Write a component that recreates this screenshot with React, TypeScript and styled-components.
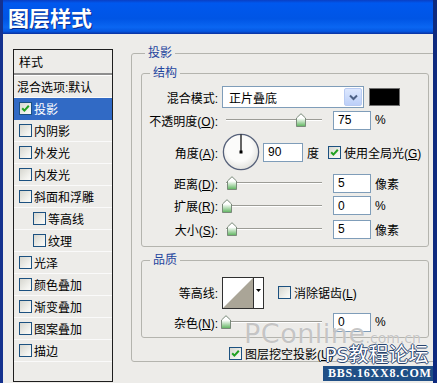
import React, { FC } from 'react';
import styled, { createGlobalStyle } from 'styled-components';

const GlobalStyle = createGlobalStyle`
  body {
    margin: 0;
    font-family: "Liberation Sans", "Noto Sans CJK SC", sans-serif;
    font-size: 12px;
    color: #000;
  }
`;

const Window = styled.div`
  position: relative;
  width: 437px;
  height: 383px;
  overflow: hidden;
  box-sizing: border-box;
  border-left: 3px solid #14318e;
  border-right: 4px solid #0e2a7e;
  background: #edece9;
`;

const TitleBar = styled.div`
  height: 34px;
  box-sizing: border-box;
  padding-left: 5px;
  display: flex;
  align-items: center;

  background: linear-gradient(
    #0a3fc4 0%,
    #0058ee 9%,
    #0055e5 55%,
    #0a66f2 80%,
    #0557e2 92%,
    #0a2f9c 100%
  );
  color: #fff;
  font-family: "Noto Sans CJK SC", sans-serif;
  font-size: 21px;
  font-weight: bold;
  text-shadow: 1px 1px 0 #0a2a8a;
`;

const Body = styled.div`
  display: flex;
  align-items: flex-start;
  padding-left: 10px;
  height: 349px;
  overflow: hidden;
`;

/* ---------- style list ---------- */

const StyleList = styled.div`
  flex: none;
  width: 100px;
  height: 333px;
  margin-top: 15px;
  box-sizing: border-box;
  border: 1px solid #1e1e1e;
  background: #edece9;
`;

const ListHeader = styled.div`
  height: 23px;
  padding-left: 5px;
  display: flex;
  align-items: center;
  border-bottom: 2px solid #8e8e8e;
  box-shadow: 0 1px 0 #fff;
  margin-bottom: 1px;
`;

const ListRow = styled.div<{ $indent?: boolean; $selected?: boolean; $plain?: boolean }>`
  height: 22px;
  box-sizing: border-box;
  display: flex;
  align-items: center;
  gap: 2px;
  padding-left: ${(p) => (p.$plain ? 3 : p.$indent ? 19 : 5)}px;
  border-bottom: 1px solid ${(p) => (p.$selected ? '#316ac5' : '#fafafa')};
  background: ${(p) => (p.$selected ? '#316ac5' : 'transparent')};
  color: ${(p) => (p.$selected ? '#fff' : '#000')};
  white-space: nowrap;
`;

const Box = styled.span`
  flex: none;
  position: relative;
  width: 13px;
  height: 13px;
  box-sizing: border-box;
  border: 1px solid #1c5180;
  background: linear-gradient(135deg, #d6d6cf 0%, #f2f2ee 70%, #fbfbf9 100%);

  svg {
    position: absolute;
    left: 0;
    top: 0;
  }
`;

const Check: FC<{ checked?: boolean }> = ({ checked }) => (
  <Box>
    {checked && (
      <svg width="11" height="11" viewBox="0 0 11 11">
        <path d="M2.2 5.2 L4.4 7.6 L8.8 2.8" fill="none" stroke="#21a121" strokeWidth="2" />
      </svg>
    )}
  </Box>
);

/* ---------- group boxes ---------- */

const GroupBox = styled.fieldset<{ $w: number }>`
  flex: none;
  width: ${(p) => p.$w}px;
  margin: 0;
  padding: 0;
  min-width: 0;
  box-sizing: border-box;
  border: 1px solid #b4b4ae;
  border-radius: 3px;
`;

const GroupTitle = styled.legend<{ $offset: number }>`
  margin-left: ${(p) => p.$offset}px;
  padding: 0 3px;
  font-size: 12px;
  line-height: 14px;
  color: #1f459e;
`;

const Main = styled(GroupBox)`
  margin-top: 12px;
  margin-left: 18px;
`;

const MainInner = styled.div`
  padding: 6px 0 0 9px;
`;

const Section = styled(GroupBox)`
  margin-bottom: 6px;
`;

const Rows = styled.div<{ $top: number; $bottom: number }>`
  padding: ${(p) => p.$top}px 0 ${(p) => p.$bottom}px 0;
`;

const Row = styled.div<{ $h: number }>`
  height: ${(p) => p.$h}px;
  display: flex;
  align-items: center;
  white-space: nowrap;
`;

const Label = styled.div`
  flex: none;
  width: 76px;
  margin-right: 4px;
  text-align: right;
`;

const Select = styled.div`
  width: 142px;
  height: 22px;
  box-sizing: border-box;
  display: flex;
  align-items: center;
  padding: 0 1px 0 6px;
  border: 1px solid #7f9db9;
  background: #fff;
`;

const SelectText = styled.span`
  flex: 1;
`;

const SelectButton = styled.span`
  width: 18px;
  height: 18px;
  box-sizing: border-box;
  display: flex;
  align-items: center;
  justify-content: center;
  border: 1px solid #b9cbf2;
  border-radius: 2px;
  background: linear-gradient(#dde8fe, #bccff8);
`;

const Swatch = styled.div`
  width: 31px;
  height: 18px;
  margin-left: 5px;
  box-sizing: border-box;
  border: 1px solid #6f6f6f;
  background: #000;
`;

const Slider = styled.div`
  position: relative;
  flex: none;
  width: 106px;
  height: 14px;
  margin-right: 5px;

  &::before {
    content: '';
    position: absolute;
    left: 4px;
    right: 6px;
    top: 6px;
    height: 1px;
    background: #9c9c96;
    box-shadow: 0 1px 0 #fff;
  }
`;

const Thumb = styled.svg`
  position: absolute;
  top: 0;
  margin-left: -5px;
`;

const Field = styled.div<{ $w: number }>`
  flex: none;
  width: ${(p) => p.$w}px;
  height: 19px;
  box-sizing: border-box;
  display: flex;
  align-items: center;
  padding-left: 4px;
  border: 1px solid #7f9db9;
  background: #fff;
`;

const Unit = styled.span`
  margin-left: 4px;
`;

const Dial = styled.svg`
  flex: none;
  margin-right: 3px;
`;

const Degree = styled.span`
  margin: 0 9px 0 4px;
`;

const CheckLabel = styled.label<{ $ml?: number }>`
  display: flex;
  align-items: center;
  gap: 3px;
  margin-left: ${(p) => p.$ml ?? 0}px;
`;

const Contour = styled.div`
  flex: none;
  display: flex;
  width: 42px;
  height: 32px;
  box-sizing: border-box;
  border: 1px solid #303030;
  background: #fff;
  margin-right: 14px;
`;

const ContourPreview = styled.svg`
  border-right: 1px solid #303030;
`;

const ContourArrow = styled.div`
  flex: 1;
  display: flex;
  justify-content: center;
  padding-top: 11px;
`;

const KnockoutRow = styled.div`
  height: 16px;
  margin-top: 7px;
  display: flex;
  align-items: center;
`;

/* ---------- watermark ---------- */

const Watermark = styled.div`
  position: absolute;
  left: 0;
  top: 0;
  pointer-events: none;
`;

const SiteMark = styled.div`
  position: absolute;
  left: 241px;
  top: 318px;
  white-space: nowrap;
  font-family: "DejaVu Sans", sans-serif;
  color: rgba(160, 160, 160, 0.6);
  text-shadow: 0 0 1px rgba(255, 255, 255, 0.9);

  b {
    font-size: 27px;
    font-weight: normal;
    letter-spacing: 0.5px;
  }

  small {
    font-size: 14px;
  }
`;

const ForumMark = styled.div`
  position: absolute;
  left: 322px;
  top: 342px;
  white-space: nowrap;
  font-family: "Noto Sans CJK SC", sans-serif;
  font-size: 20px;
  line-height: 24px;
  color: #fff;
  text-shadow:
    1px 0 0 #28436e,
    -1px 0 0 #28436e,
    0 1px 0 #28436e,
    0 -1px 0 #28436e;

  span {
    font-family: "DejaVu Sans", sans-serif;
    font-size: 19px;
  }
`;

const UrlBar = styled.div`
  position: absolute;
  left: 320px;
  top: 366px;
  width: 117px;
  height: 15px;
  display: flex;
  align-items: center;
  padding-left: 5px;
  box-sizing: border-box;
  background: #1f4f86;
  color: #fff;
  font-family: "Liberation Serif", serif;
  font-weight: bold;
  font-size: 12px;
  letter-spacing: 0.8px;
`;

/* ---------- parts ---------- */

const listItems: { name: string; checked?: boolean; indent?: boolean; selected?: boolean }[] = [
  { name: '投影', checked: true, selected: true },
  { name: '内阴影' },
  { name: '外发光' },
  { name: '内发光' },
  { name: '斜面和浮雕' },
  { name: '等高线', indent: true },
  { name: '纹理', indent: true },
  { name: '光泽' },
  { name: '颜色叠加' },
  { name: '渐变叠加' },
  { name: '图案叠加' },
  { name: '描边' },
];

const SliderField: FC<{ pos: number }> = ({ pos }) => (
  <Slider>
    <Thumb width="10" height="14" viewBox="0 0 10 14" style={{ left: pos }}>
      <defs>
        <linearGradient id="thumbFill" x1="0" y1="0" x2="0" y2="1">
          <stop offset="0.35" stopColor="#ffffff" />
          <stop offset="1" stopColor="#5cb35c" />
        </linearGradient>
      </defs>
      <path d="M0.5 5 L5 0.7 L9.5 5 V13.5 H0.5 Z" fill="url(#thumbFill)" stroke="#7a8a7a" />
    </Thumb>
  </Slider>
);

const SliderRow: FC<{ h: number; label: React.ReactNode; pos: number; value: string; unit: string }> = ({
  h,
  label,
  pos,
  value,
  unit,
}) => (
  <Row $h={h}>
    <Label>{label}</Label>
    <SliderField pos={pos} />
    <Field $w={38}>{value}</Field>
    <Unit>{unit}</Unit>
  </Row>
);

const App: FC = () => {
  return (
    <>
      <GlobalStyle />
      <Window>
        <TitleBar>图层样式</TitleBar>
        <Body>
          <StyleList>
            <ListHeader>样式</ListHeader>
            <ListRow $plain>混合选项:默认</ListRow>
            {listItems.map((item) => (
              <ListRow key={item.name} $indent={item.indent} $selected={item.selected}>
                <Check checked={item.checked} />
                {item.name}
              </ListRow>
            ))}
          </StyleList>

          <Main $w={320}>
            <GroupTitle $offset={13}>投影</GroupTitle>
            <MainInner>
              <Section $w={288}>
                <GroupTitle $offset={8}>结构</GroupTitle>
                <Rows $top={6} $bottom={5}>
                  <Row $h={22}>
                    <Label>混合模式:</Label>
                    <Select>
                      <SelectText>正片叠底</SelectText>
                      <SelectButton>
                        <svg width="9" height="7" viewBox="0 0 9 7">
                          <path d="M1 1.5 L4.5 5 L8 1.5" fill="none" stroke="#4d6185" strokeWidth="2" />
                        </svg>
                      </SelectButton>
                    </Select>
                    <Swatch />
                  </Row>
                  <SliderRow
                    h={24}
                    label={
                      <>
                        不透明度(<u>O</u>):
                      </>
                    }
                    pos={79}
                    value="75"
                    unit="%"
                  />
                  <Row $h={40}>
                    <Label>
                      角度(<u>A</u>):
                    </Label>
                    <Dial width="38" height="38" viewBox="0 0 38 38">
                      <defs>
                        <radialGradient id="dialFill" cx="0.45" cy="0.4" r="0.6">
                          <stop offset="0.6" stopColor="#fbfbfa" />
                          <stop offset="1" stopColor="#e2e2de" />
                        </radialGradient>
                      </defs>
                      <circle cx="19" cy="19" r="17.6" fill="url(#dialFill)" stroke="#56617a" strokeWidth="1.3" />
                      <line x1="19" y1="19" x2="19" y2="1.5" stroke="#000" strokeWidth="1.2" />
                      <rect x="17.5" y="17.5" width="3" height="3" fill="#000" />
                    </Dial>
                    <Field $w={40}>90</Field>
                    <Degree>度</Degree>
                    <CheckLabel>
                      <Check checked />
                      <span>
                        使用全局光(<u>G</u>)
                      </span>
                    </CheckLabel>
                  </Row>
                  <SliderRow
                    h={22}
                    label={
                      <>
                        距离(<u>D</u>):
                      </>
                    }
                    pos={10}
                    value="5"
                    unit="像素"
                  />
                  <SliderRow
                    h={23}
                    label={
                      <>
                        扩展(<u>R</u>):
                      </>
                    }
                    pos={5}
                    value="0"
                    unit="%"
                  />
                  <SliderRow
                    h={24}
                    label={
                      <>
                        大小(<u>S</u>):
                      </>
                    }
                    pos={10}
                    value="5"
                    unit="像素"
                  />
                </Rows>
              </Section>

              <Section $w={288}>
                <GroupTitle $offset={8}>品质</GroupTitle>
                <Rows $top={9} $bottom={2}>
                  <Row $h={33}>
                    <Label>等高线:</Label>
                    <Contour>
                      <ContourPreview width="30" height="30" viewBox="0 0 30 30">
                        <path d="M0 30 L30 0 V30 Z" fill="#aaa597" />
                      </ContourPreview>
                      <ContourArrow>
                        <svg width="5" height="3" viewBox="0 0 5 3">
                          <path d="M0 0 H5 L2.5 3 Z" fill="#000" />
                        </svg>
                      </ContourArrow>
                    </Contour>
                    <CheckLabel>
                      <Check />
                      <span>
                        消除锯齿(<u>L</u>)
                      </span>
                    </CheckLabel>
                  </Row>
                  <SliderRow
                    h={26}
                    label={
                      <>
                        杂色(<u>N</u>):
                      </>
                    }
                    pos={4}
                    value="0"
                    unit="%"
                  />
                </Rows>
              </Section>

              <KnockoutRow>
                <CheckLabel $ml={88}>
                  <Check checked />
                  <span>
                    图层挖空投影(<u>U</u>)
                  </span>
                </CheckLabel>
              </KnockoutRow>
            </MainInner>
          </Main>
        </Body>

        <Watermark>
          <SiteMark>
            <b>PConline</b>
            <small>.com.cn</small>
          </SiteMark>
          <ForumMark>
            <span>PS</span>教程论坛
          </ForumMark>
          <UrlBar>BBS.16XX8.COM</UrlBar>
        </Watermark>
      </Window>
    </>
  );
};

export default App;
